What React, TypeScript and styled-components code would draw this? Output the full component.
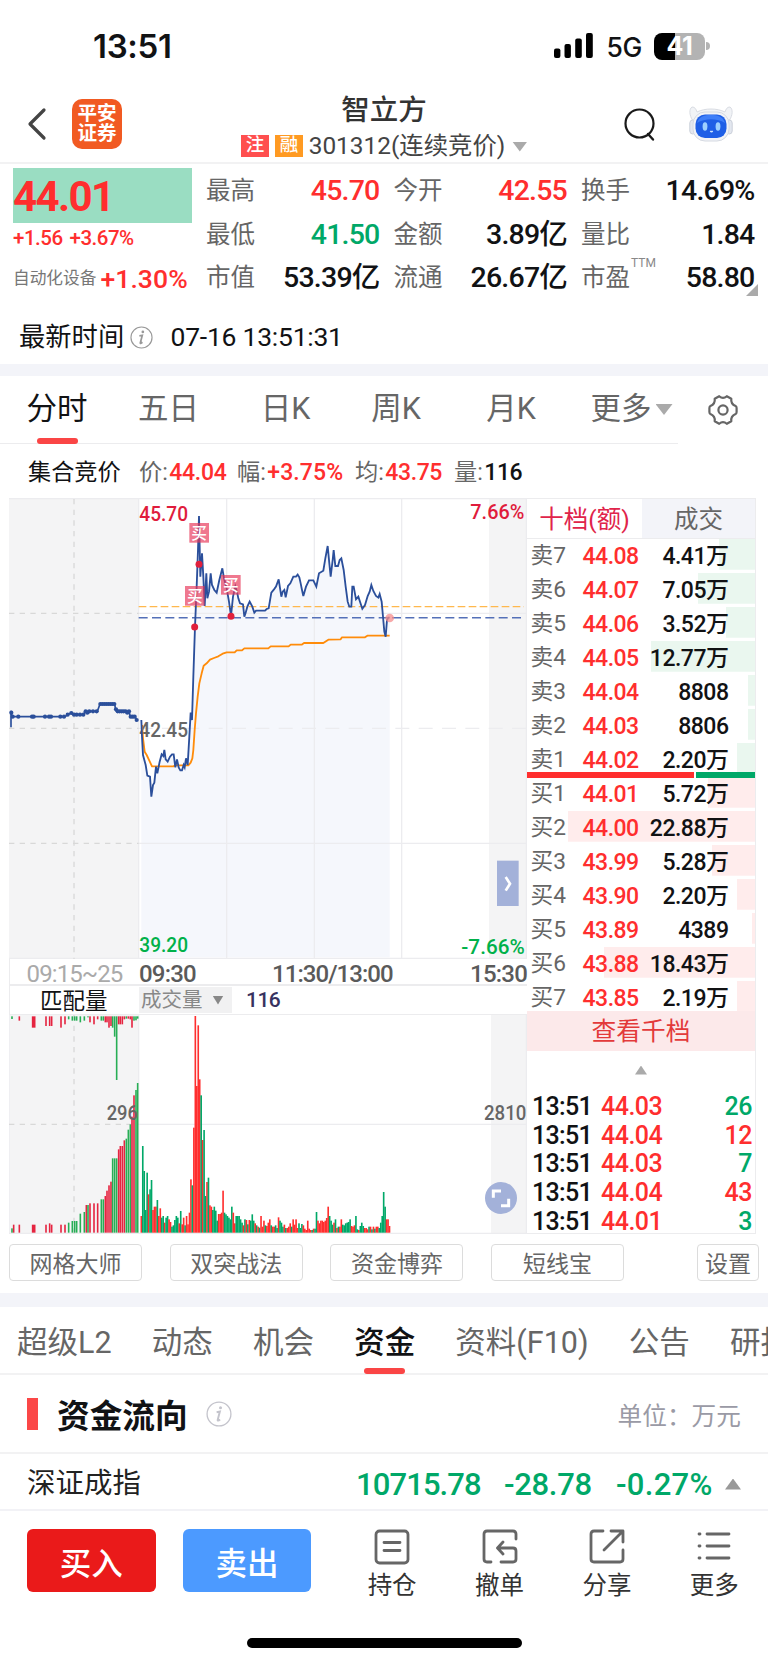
import React from "react";
import styled, { createGlobalStyle } from "styled-components";

const RED = "#ff2e2e";
const GREEN = "#00a868";
const INK = "#111214";
const GREY = "#666";
const RULE = "#ececee";

const Global = createGlobalStyle`
  * { box-sizing: border-box; }
  html, body { margin: 0; background: #fff; }
  body {
    width: 768px;
    overflow-x: hidden;
    font-family: Roboto, "Noto Sans CJK SC", sans-serif;
    color: ${INK};
    line-height: 1;
  }
  svg { display: block; flex: none; }
`;

const Screen = styled.div`
  width: 768px;
  height: 1662px;
  overflow: hidden;
  display: flex;
  flex-direction: column;
  white-space: nowrap;
`;

const Num = styled.span<{ $size: number; $color?: string; $weight?: number; $ls?: number }>`
  font-size: ${(p) => p.$size}px;
  font-weight: ${(p) => p.$weight ?? 500};
  color: ${(p) => p.$color ?? INK};
  letter-spacing: ${(p) => p.$ls ?? -0.5}px;
`;

/* ---------- status bar ---------- */
const StatusBar = styled.div`
  height: 84px;
  padding: 8px 58px 0 93px;
  display: flex;
  align-items: center;
  font-family: Inter, sans-serif;
`;
const Clock = styled.div`
  flex: 1;
  font-size: 33px;
  font-weight: 600;
  letter-spacing: -0.3px;
`;
const Network = styled.div`
  margin: 2px 12px 0 13px;
  font-size: 26.5px;
  font-weight: 500;
  letter-spacing: -0.3px;
`;
const Battery = styled.div`
  width: 51px;
  height: 27px;
  border-radius: 8px;
  background: linear-gradient(90deg, #000 0 21px, #b3b3b3 21px);
  color: #fff;
  font-size: 25px;
  font-weight: 700;
  line-height: 27px;
  text-align: center;
  letter-spacing: -0.3px;
`;
const BatteryCap = styled.div`
  width: 4px;
  height: 8px;
  margin-left: 1px;
  border-radius: 0 4px 4px 0;
  background: #b3b3b3;
`;

/* ---------- header ---------- */
const Header = styled.div`
  height: 80px;
  border-bottom: 2px solid #f2f2f3;
  padding: 0 35px 0 27px;
  display: flex;
  align-items: center;
`;
const HeaderSide = styled.div<{ $width: number; $gap: number; $end?: boolean }>`
  width: ${(p) => p.$width}px;
  padding-top: 1px;
  display: flex;
  align-items: center;
  gap: ${(p) => p.$gap}px;
  justify-content: ${(p) => (p.$end ? "flex-end" : "flex-start")};
`;
const Brand = styled.div`
  width: 50px;
  height: 50px;
  border-radius: 10px;
  background: #f15a22;
  color: #fff;
  font-size: 19.5px;
  line-height: 19.5px;
  font-weight: 700;
  padding-top: 5.5px;
  text-align: center;
`;
const TitleBlock = styled.div`
  flex: 1;
  padding: 9px 0 0 1px;
  display: flex;
  flex-direction: column;
  align-items: center;
`;
const StockName = styled.div`
  font-size: 28.5px;
  font-weight: 500;
  line-height: 38px;
  color: #333;
`;
const StockMeta = styled.div`
  display: flex;
  align-items: center;
  height: 34px;
  font-size: 24.4px;
  color: #444;
`;
const Badge = styled.div<{ $bg: string }>`
  width: 28.5px;
  height: 22px;
  margin: -2px 5.5px 0 0;
  background: ${(p) => p.$bg};
  color: #fff;
  font-size: 18.5px;
  font-weight: 500;
  line-height: 21px;
  text-align: center;
`;
const Down = styled.i<{ $w: number; $h: number; $ml: number; $up?: boolean; $color?: string }>`
  width: ${(p) => p.$w}px;
  height: ${(p) => p.$h}px;
  margin-left: ${(p) => p.$ml}px;
  background: ${(p) => p.$color ?? "#aaa"};
  clip-path: ${(p) => (p.$up ? "polygon(50% 0, 100% 100%, 0 100%)" : "polygon(0 0, 100% 0, 50% 100%)")};
`;

/* ---------- quote ---------- */
const Quote = styled.section`
  height: 200px;
  padding: 4px 13px 0 13px;
`;
const QuoteTop = styled.div`
  display: flex;
  position: relative;
`;
const PriceCol = styled.div`
  width: 179px;
  margin-right: 14px;
`;
const LastPrice = styled.div`
  height: 55px;
  display: flex;
  align-items: center;
  padding-top: 2px;
  background: #9addc2;
`;
const ChangeRow = styled.div`
  height: 30px;
  display: flex;
  align-items: center;
  gap: 7px;
`;
const SectorRow = styled.div`
  height: 53px;
  display: flex;
  align-items: center;
  gap: 4px;
  font-size: 16.7px;
  color: #777;
`;
const StatGrid = styled.div`
  flex: 1;
  padding-top: 1.5px;
  display: grid;
  grid-template-columns: 173.5px 173.5px 173.5px;
  column-gap: 14px;
  grid-auto-rows: 43.6px;
`;
const Stat = styled.div`
  display: flex;
  align-items: center;
  justify-content: space-between;
  font-size: 24.5px;
  color: ${GREY};
`;
const Ttm = styled.sup`
  position: absolute;
  left: 618px;
  top: 89px;
  font-size: 12px;
  line-height: 1;
  color: #888;
`;
const Corner = styled.i`
  position: absolute;
  right: -3px;
  top: 116px;
  width: 12px;
  height: 12px;
  background: #aaa;
  clip-path: polygon(100% 0, 100% 100%, 0 100%);
`;
const TimeRow = styled.div`
  height: 66px;
  padding: 0 0 2px 6px;
  margin-top: -1px;
  display: flex;
  align-items: center;
  font-size: 26.3px;
`;
const TimeValue = styled(Num)`
  margin-left: 18px;
`;
const Band = styled.div<{ $h: number }>`
  height: ${(p) => p.$h}px;
  flex: none;
  background: #f3f4f9;
`;

/* ---------- period tabs ---------- */
const PeriodTabs = styled.nav`
  height: 68px;
  display: grid;
  grid-template-columns: 114px 109px 125px 96px 134px 100px 90px;
`;
const PeriodTab = styled.div<{ $active?: boolean; $shift?: number }>`
  position: relative;
  display: flex;
  align-items: center;
  justify-content: center;
  font-size: 30.5px;
  padding-left: ${(p) => p.$shift ?? 0}px;
  color: ${(p) => (p.$active ? INK : GREY)};
  border-bottom: 1.5px solid ${RULE};
`;
const Underline = styled.i`
  position: absolute;
  bottom: -1px;
  left: 50%;
  width: 41px;
  height: 6.5px;
  margin-left: -20.5px;
  border-radius: 3px;
  background: #fa4545;
`;
const GearCell = styled.div`
  display: flex;
  align-items: center;
  justify-content: center;
  padding-bottom: 1px;
`;
const InfoRow = styled.div`
  height: 54px;
  padding-left: 28px;
  padding-top: 4px;
  display: flex;
  align-items: center;
  font-size: 23.2px;
`;
const InfoItem = styled.span<{ $w: number }>`
  width: ${(p) => p.$w}px;
  color: ${GREY};
  ${Num} { margin-left: 1.5px; }
`;
const Session = styled.span`
  width: 111px;
  color: ${INK};
`;

/* ---------- chart block ---------- */
const Market = styled.section`
  height: 736px;
  padding: 0 12px 0 9px;
  display: flex;
`;
const Charts = styled.div`
  width: 518px;
`;
const AxisRow = styled.div`
  height: 27px;
  padding-top: 3px;
  display: grid;
  grid-template-columns: 129px 133px 121px 1fr;
  align-items: center;
  border-bottom: 2px solid ${RULE};
  border-left: 1px solid ${RULE};
`;
const AxisCell = styled.div<{ $align?: string }>`
  text-align: ${(p) => p.$align ?? "left"};
`;
const VolumeHead = styled.div`
  height: 29px;
  display: flex;
  align-items: center;
  border-left: 1px solid ${RULE};
  border-bottom: 1px solid ${RULE};
`;
const MatchLabel = styled.div`
  width: 129px;
  padding: 2px 0 0 30px;
  font-size: 22.5px;
`;
const Picker = styled.div`
  width: 93px;
  height: 26px;
  padding-left: 2px;
  margin-right: 14px;
  background: #f1f1f2;
  display: flex;
  align-items: center;
  font-size: 20.5px;
  color: #888;
`;

/* ---------- order book ---------- */
const Book = styled.aside`
  width: 229px;
  border: solid ${RULE};
  border-width: 1px 1px 1px 0;
`;
const BookTabs = styled.div`
  height: 40px;
  display: grid;
  grid-template-columns: 115px 1fr;
  border-bottom: 1px solid ${RULE};
`;
const BookTab = styled.div<{ $active?: boolean }>`
  display: flex;
  align-items: center;
  justify-content: center;
  padding-top: 4px;
  font-size: 24.5px;
  color: ${(p) => (p.$active ? "#e0244a" : GREY)};
  background: ${(p) => (p.$active ? "#fff" : "#f3f4f9")};
`;
const Level = styled.div<{ $bar: number; $tint: string }>`
  height: 30.5px;
  margin-bottom: 3.5px;
  padding-top: 4.5px;
  padding-left: 3.5px;
  display: grid;
  grid-template-columns: 52px 58px 88px;
  align-items: center;
  font-size: 22.7px;
  color: ${GREY};
  background: linear-gradient(${(p) => p.$tint}, ${(p) => p.$tint}) right / ${(p) => p.$bar}px 100% no-repeat;
`;
const Right = styled.div`
  text-align: right;
`;
const Ratio = styled.div`
  height: 5.5px;
  margin: -5px 0 -0.5px;
  display: grid;
  grid-template-columns: 167px 1fr;
  column-gap: 1.5px;
  position: relative;
`;
const RatioPart = styled.div<{ $c: string }>`
  background: ${(p) => p.$c};
`;
const MoreLevels = styled.div`
  height: 39.5px;
  margin-top: -4px;
  background: #fce9ea;
  color: #e33a3a;
  font-size: 24.7px;
  display: flex;
  align-items: center;
  justify-content: center;
  padding-top: 4px;
`;
const Fold = styled.div`
  height: 41.5px;
  display: flex;
  justify-content: center;
  padding-top: 15px;
`;
const Trade = styled.div`
  height: 28.6px;
  padding: 1px 3px 0 5px;
  display: grid;
  grid-template-columns: 69px 70px 1fr;
  align-items: center;
`;

/* ---------- shortcuts ---------- */
const Shortcuts = styled.div`
  height: 59px;
  padding: 10px 9px 0;
  display: flex;
  gap: 27.7px;
`;
const Shortcut = styled.button<{ $w: number; $last?: boolean }>`
  width: ${(p) => p.$w}px;
  height: 37px;
  margin-left: ${(p) => (p.$last ? "auto" : "0")};
  padding: 4px 0 0;
  border: 1.5px solid #dcdcdc;
  border-radius: 4px;
  background: #fff;
  font: 23px/1 Roboto, "Noto Sans CJK SC", sans-serif;
  color: ${GREY};
`;

/* ---------- content tabs ---------- */
const ContentTabs = styled.nav`
  height: 68px;
  padding-left: 17px;
  display: flex;
  gap: 40.2px;
  border-bottom: 2px solid #f2f2f3;
`;
const ContentTab = styled.div<{ $active?: boolean }>`
  position: relative;
  flex: none;
  display: flex;
  align-items: center;
  padding-top: 7px;
  font-size: 30.5px;
  font-weight: ${(p) => (p.$active ? 500 : 400)};
  color: ${(p) => (p.$active ? INK : GREY)};
`;
const SectionHead = styled.div`
  height: 79px;
  padding: 0 27px;
  display: flex;
  align-items: center;
  border-bottom: 2px solid #f2f2f3;
`;
const Mark = styled.i`
  width: 11px;
  height: 32px;
  margin-right: 19px;
  background: #fb4747;
`;
const SectionTitle = styled.h2`
  margin: 8px 18px 0 0;
  font-size: 32.7px;
  font-weight: 700;
`;
const Unit = styled.div`
  margin: 7px 0 0 auto;
  font-size: 24.7px;
  color: #9a9aa5;
`;
const IndexRow = styled.div`
  height: 57px;
  padding: 5px 27px 0;
  display: flex;
  align-items: center;
  border-bottom: 2px solid #f2f2f6;
  font-size: 28.5px;
  color: #222;
`;
const IndexValues = styled.div`
  margin-left: auto;
  display: grid;
  grid-template-columns: 148px 112px 97px;
`;

/* ---------- bottom bar ---------- */
const BottomBar = styled.div`
  height: 127px;
  padding: 18px 0 0 27px;
  display: flex;
  align-items: flex-start;
`;
const TradeButton = styled.button<{ $bg: string }>`
  width: 129px;
  height: 63px;
  margin-right: 27px;
  padding: 2px 0 0;
  border: 0;
  border-radius: 6px;
  background: ${(p) => p.$bg};
  color: #fff;
  font: 500 31.5px/1 "Noto Sans CJK SC", sans-serif;
`;
const Actions = styled.div`
  flex: 1;
  display: grid;
  grid-template-columns: repeat(4, 107.4px);
`;
const Action = styled.div`
  display: flex;
  flex-direction: column;
  align-items: center;
  gap: 9px;
  font-size: 24.5px;
  color: #333;
`;
const HomeIndicator = styled.div`
  width: 275px;
  height: 9.5px;
  margin: 0 auto;
  border-radius: 5px;
  background: #000;
`;

const InfoIcon = ({ size, color }: { size: number; color: string }) => (
  <svg width={size} height={size} viewBox="0 0 24 24">
    <circle cx="12" cy="12" r="11" fill="none" stroke={color} strokeWidth="1.2" />
    <circle cx="13.4" cy="6.2" r="1.4" fill={color} />
    <path d="M9.8 10.4l3-.6-2 7.6c-.2 1 .6.9 2.2-.4" fill="none" stroke={color} strokeWidth="1.8" />
  </svg>
);

const Robot = () => (
  <svg width="44" height="36" viewBox="0 0 44 36">
    <path d="M4 15C0 9 0 3 3 1c3 0 4 2 5 5 8-4 20-4 28 0 1-3 2-5 5-5 3 2 3 8-1 14z" fill="#f1f3f6" stroke="#d9dce3" strokeWidth="1" />
    <rect x="0.8" y="14" width="6" height="14" rx="3" fill="#e3e7ef" stroke="#cbd0da" />
    <rect x="37.2" y="14" width="6" height="14" rx="3" fill="#e3e7ef" stroke="#cbd0da" />
    <rect x="4" y="6" width="36" height="29" rx="12" fill="#f1f3f7" stroke="#d6dae2" />
    <rect x="6.5" y="8.5" width="31" height="23.5" rx="9.5" fill="#1f5fe6" />
    <path d="M8 17c2-7 8-8 14-8s12 1 14 8c-8-5-20-5-28 0z" fill="#4b8bff" opacity="0.7" />
    <ellipse cx="16" cy="20.5" rx="2.4" ry="4.2" fill="#9ed0ff" />
    <ellipse cx="29" cy="20.5" rx="2.4" ry="4.2" fill="#9ed0ff" />
    <path d="M21.3 25q1.2 1.5 2.4 0" stroke="#cfe6ff" strokeWidth="1.4" fill="none" />
  </svg>
);

const Gear = () => (
  <svg width="32" height="32" viewBox="0 0 32 32" fill="none" stroke="#666" strokeWidth="2.2" strokeLinejoin="round">
    <path d="M12.2 2.2Q16 5.6 19.8 2.2L24.3 4.8Q23.6 9.8 28.6 12Q29.6 12.5 29.6 14V18Q29.6 19.5 28.6 20Q23.6 22.2 24.3 27.2L19.8 29.8Q16 26.4 12.2 29.8L7.7 27.2Q8.4 22.2 3.4 20Q2.4 19.5 2.4 18V14Q2.4 12.5 3.4 12Q8.4 9.8 7.7 4.8Z" />
    <circle cx="16" cy="16" r="4.6" />
  </svg>
);

/* ---------- price chart; three drawing units per pixel ---------- */
const PRICE =
  "424,690 426,740 429,795 437,825 442,857 450,860 454,920 459,885 463,878 468,830 472,850 479,815 485,793 490,798 493,780 497,808 503,815 510,800 516,793 521,793 526,832 531,808 536,832 541,841 546,841 551,825 554,832 558,805 563,825 568,740 572,668 576,690 580,560 585,410 590,290 594,180 597,78 601,260 606,190 610,260 614,348 619,250 622,325 627,305 632,250 636,285 643,300 650,308 658,270 667,235 672,265 680,295 687,335 693,378 699,320 706,290 712,310 715,325 720,340 729,343 733,380 737,368 742,350 749,335 757,350 763,368 768,362 795,362 800,357 806,355 814,308 822,298 828,290 836,268 844,320 848,305 853,300 857,322 864,288 871,280 880,260 888,260 893,254 898,262 902,280 906,300 910,318 918,290 927,271 940,271 949,290 957,250 970,242 976,205 983,168 988,220 992,260 998,210 1001,180 1006,228 1014,228 1019,210 1024,205 1031,240 1037,290 1043,335 1048,350 1054,350 1057,290 1061,290 1068,328 1075,320 1080,335 1087,356 1095,345 1103,318 1109,305 1114,285 1120,303 1128,318 1135,323 1139,312 1145,335 1149,380 1153,425 1157,440 1161,390 1165,383 1169,383";
const AVERAGE =
  "426,705 429,745 434,785 440,795 448,812 456,829 520,829 526,826 565,826 572,818 577,805 580,780 584,720 588,670 593,620 598,580 605,550 611,527 620,520 630,509 642,504 655,499 668,491 680,487 704,487 710,481 726,481 733,475 805,475 812,469 866,469 872,464 905,464 912,459 970,459 985,449 1022,448 1026,442 1095,442 1102,437 1169,437";
const AUCTION =
  "33,668 37,680 55,680 97,680 195,680 203,674 214,669 222,674 250,674 256,664 292,664 300,642 344,642 347,660 350,664 388,664 390,680 405,680 410,690";
const AUCTION_DOTS: [number, number][] = [
  [34, 668], [38, 680], [55, 680], [96, 680], [101, 680], [135, 680], [147, 680], [153, 680], [181, 680], [192, 680],
  [203, 674], [214, 669], [222, 674], [230, 674], [240, 674], [250, 674], [257, 664], [262, 668], [268, 664], [279, 664],
  [290, 664], [301, 642], [307, 642], [313, 642], [319, 642], [325, 642], [331, 642], [337, 642], [343, 642], [348, 658],
  [353, 664], [359, 664], [365, 664], [371, 664], [377, 664], [382, 668], [387, 664], [392, 680], [398, 680], [404, 680], [410, 690],
];
const BUYS: [number, number, number, number][] = [
  [568, 99, 597, 223],
  [555, 288, 584, 411],
  [663, 255, 693, 379],
];

type LabelProps = { x: number; y: number; len: number; fill: string; children: string };
const ChartLabel = ({ x, y, len, fill, children }: LabelProps) => (
  <text x={x} y={y} textLength={len} lengthAdjust="spacingAndGlyphs" fontSize="62" fontWeight="500" fill={fill}>
    {children}
  </text>
);

const PriceChart = () => (
  <svg width="518" height="461" viewBox="27 24 1554 1383">
    <rect x="27" y="24" width="389" height="1383" fill="#f4f4f5" />
    <rect x="1467" y="24" width="114" height="1383" fill="#f4f4f5" />
    <polygon points={`424,1402 ${PRICE} 1169,1402`} fill="#f5f7fc" />
    <g stroke="#ececef" strokeWidth="4" fill="none">
      <path d="M27 26H1581M416 24V1407M680 24V1407M943 24V1407M1205 24V1407M416 370H1581M416 1060H1581M27 1405H1581M1579 24V1407" />
      <path d="M416 715H1581" strokeDasharray="42 28" />
    </g>
    <g stroke="#d8d8d8" strokeWidth="4">
      <path d="M222 27V1407M27 370H416M27 715H416M27 1060H416" strokeDasharray="16 16" />
    </g>
    <path d="M416 350H1572" stroke="#ffb84d" strokeWidth="4" strokeDasharray="23 10" />
    <path d="M416 383H1566" stroke="#5470b8" strokeWidth="4.5" strokeDasharray="27 13" />
    <polyline points={AUCTION} fill="none" stroke="#2b4f9b" strokeWidth="5" />
    <path d="M33 662V712" stroke="#2b4f9b" strokeWidth="5" />
    {AUCTION_DOTS.map(([x, y]) => (
      <circle key={x} cx={x} cy={y} r="6.3" fill="#2b4f9b" />
    ))}
    <ChartLabel x={418} y={740} len={146} fill="#666">42.45</ChartLabel>
    <polyline points={AVERAGE} fill="none" stroke="#ff8c0a" strokeWidth="5.5" strokeLinejoin="round" />
    <polyline points={PRICE} fill="none" stroke="#2b4f9b" strokeWidth="5.5" />
    {BUYS.map(([x, y, cx, cy]) => (
      <g key={x}>
        <circle cx={cx} cy={cy} r="10.5" fill="#e0203c" />
        <rect x={x} y={y} width="59" height="59" fill="#e8385a" opacity="0.68" />
        <text x={x + 29.5} y={y + 47} textAnchor="middle" fontSize="47" fontWeight="500" fill="#fff">买</text>
      </g>
    ))}
    <circle cx="1169" cy="384" r="13" fill="#f58c8c" opacity="0.75" />
    <ChartLabel x={418} y={94} len={146} fill="#e01c3c">45.70</ChartLabel>
    <ChartLabel x={418} y={1386} len={146} fill="#00b14a">39.20</ChartLabel>
    <ChartLabel x={1411} y={88} len={162} fill="#e01c3c">7.66%</ChartLabel>
    <ChartLabel x={1384} y={1391} len={190} fill="#00b14a">-7.66%</ChartLabel>
    <rect x="1491" y="1112" width="65" height="136" fill="#a3b1d9" />
    <path d="M1517 1161L1530 1181L1517 1202" fill="none" stroke="#fff" strokeWidth="8" />
  </svg>
);

/* ---------- volume chart ---------- */
type Bar = [number, number, string, number?];
const MATCHED: Bar[] = [
  [36, 895, "g"], [41, 884, "r"], [58, 884, "r"], [101, 884, "r", 11], [138, 884, "r"], [149, 880, "r"], [155, 884, "r"],
  [183, 884, "r"], [195, 884, "r"], [206, 878, "g"], [217, 873, "g"], [224, 873, "g"], [230, 873, "g"], [241, 851, "g"],
  [253, 846, "g"], [259, 825, "r"], [264, 825, "g"], [270, 820, "r"], [282, 820, "r"], [293, 820, "r"], [304, 808, "g"],
  [310, 808, "g"], [316, 798, "r"], [321, 782, "r"], [327, 766, "r"], [333, 755, "r"], [338, 685, "g"], [344, 685, "g"],
  [350, 685, "g"], [356, 658, "r"], [361, 648, "r"], [367, 648, "r"], [373, 631, "r"], [379, 626, "g"], [385, 599, "g"],
  [391, 583, "g"], [396, 560, "r"], [402, 496, "r"], [408, 480, "g"], [413, 459, "g"],
];
const UNMATCHED: Bar[] = [
  [36, 267, "g"], [58, 272, "r"], [101, 293, "r", 11], [138, 288, "r"], [149, 288, "r"], [155, 288, "r"], [183, 293, "r"],
  [195, 283, "r"], [206, 268, "g"], [217, 272, "g"], [224, 272, "g"], [230, 272, "g"], [241, 277, "g"], [253, 272, "g"],
  [264, 262, "g"], [270, 277, "r"], [282, 283, "r"], [293, 268, "r"], [304, 272, "g"], [310, 272, "g"], [316, 277, "r"],
  [321, 277, "r"], [327, 293, "r"], [333, 288, "r"], [338, 293, "g"], [344, 320, "g"], [350, 450, "g"], [356, 283, "r"],
  [361, 283, "r"], [367, 283, "r"], [373, 268, "r"], [379, 266, "g"], [385, 266, "r"], [391, 268, "r"], [396, 293, "r"],
  [402, 272, "g"], [408, 271, "g"], [413, 266, "g"],
];
const VOLUME = (
  "50r 260g 185g 68g 180g 115r 130g 158g 68r 78r 78r 98g 50r 73r 45g 50g 30r 45g 50g 40r 32r 18g 22g 38g 50g 45g 28r 65g 25r 45r 22g 50r 25r 60r 160r " +
  "142g 315r 650r 440r 622r 460r 412g 278r 308g 110g 152r 165g 82r 78r 68g 78g 66g 36g 56r 56r 60r 126r 60g 55g 50g 45g 40g 78g 60r 28r 50g 50g 50g 40g 30g 22r " +
  "40g 38r 25g 38r 36g 55g 36g 28r 22g 18r 15g 50r 18r 36r 22g " +
  "20r 30r 40r 22g 18r 18r 22g 14g 46r 36g 30g 18g 24r 14g 14r 18r 28r 18g 40r 24r 40r 14r 28g 14g 26g 22r 12r 8r 36r 12r 8r 8g 12r 12g 62g 36r 28r 36r 36r 32r 36r 44r " +
  "78r 50g 36g 24g 30r 40g 14r 18g 18r 40r 24g 22g 28g 30g 32g 40g 20r 18r 22r 50g 10g 8r 20g 30g 20g 14r 14r 10r 18g 18r 10g 18r 12g 18r 18r 14g 30g 50g 122g 78g 40r 40r 20r"
)
  .split(" ")
  .map((v) => ({ h: parseInt(v, 10), up: v.endsWith("r") }));
const STEP = 4.38;

const VolumeChart = () => (
  <svg width="518" height="219" viewBox="27 255 1554 657">
    <rect x="27" y="255" width="389" height="657" fill="#f4f4f5" />
    <rect x="1473" y="255" width="108" height="657" fill="#f4f4f5" />
    <g stroke="#ececef" strokeWidth="4" fill="none">
      <path d="M416 583H1581M416 255V912M27 910H1581M1579 255V912" />
      <path d="M28 255V912" strokeWidth="2" />
    </g>
    <path d="M222 255V912M27 583H416" stroke="#d8d8d8" strokeWidth="4" strokeDasharray="16 16" />
    {MATCHED.map(([x, y, c, w = 4.8]) => (
      <rect key={`m${x}`} x={x - w / 2} y={y} width={w} height={908 - y} fill={c === "r" ? "#e52440" : "#27ae55"} />
    ))}
    {UNMATCHED.map(([x, y, c, w = 4.8]) => (
      <rect key={`u${x}`} x={x - w / 2} y={259} width={w} height={y - 259} fill={c === "r" ? "#e52440" : "#27ae55"} />
    ))}
    {VOLUME.map(({ h, up }, i) => (
      <rect key={i} x={421.5 + i * STEP} y={908 - h} width={STEP + 0.5} height={h} fill={up ? RED : GREEN} />
    ))}
    <ChartLabel x={320} y={571} len={94} fill="#666">296</ChartLabel>
    <ChartLabel x={1452} y={570} len={127} fill="#666">2810</ChartLabel>
    <circle cx="1503" cy="804" r="48" fill="#a3b1d9" />
    <path d="M1480 803V783H1503M1526 806V827H1503" fill="none" stroke="#fff" strokeWidth="9" />
  </svg>
);

const STATS: [string, string, string][] = [
  ["最高", "45.70", RED], ["今开", "42.55", RED], ["换手", "14.69%", INK],
  ["最低", "41.50", GREEN], ["金额", "3.89亿", INK], ["量比", "1.84", INK],
  ["市值", "53.39亿", INK], ["流通", "26.67亿", INK], ["市盈", "58.80", INK],
];
const SELLS: [string, string, string, number][] = [
  ["卖7", "44.08", "4.41万", 36], ["卖6", "44.07", "7.05万", 57], ["卖5", "44.06", "3.52万", 29], ["卖4", "44.05", "12.77万", 104],
  ["卖3", "44.04", "8808", 7], ["卖2", "44.03", "8806", 7], ["卖1", "44.02", "2.20万", 18],
];
const BIDS: [string, string, string, number][] = [
  ["买1", "44.01", "5.72万", 47], ["买2", "44.00", "22.88万", 187], ["买3", "43.99", "5.28万", 43], ["买4", "43.90", "2.20万", 18],
  ["买5", "43.89", "4389", 3], ["买6", "43.88", "18.43万", 151], ["买7", "43.85", "2.19万", 18],
];
const TRADES: [string, string, string][] = [
  ["44.03", "26", GREEN], ["44.04", "12", RED], ["44.03", "7", GREEN], ["44.04", "43", RED], ["44.01", "3", GREEN],
];

const Levels = ({ rows, tint }: { rows: [string, string, string, number][]; tint: string }) => (
  <>
    {rows.map(([name, price, amount, bar]) => (
      <Level key={name} $bar={bar} $tint={tint}>
        <span>{name}</span>
        <Num $size={23} $color={RED} $ls={-0.5}>{price}</Num>
        <Right><Num $size={23} $ls={-0.5}>{amount}</Num></Right>
      </Level>
    ))}
  </>
);

const stroke = { fill: "none", stroke: "#666", strokeWidth: 2.8, strokeLinecap: "round", strokeLinejoin: "round" } as const;

export default function App() {
  return (
    <Screen>
      <Global />
      <StatusBar>
        <Clock>13:51</Clock>
        <svg width="39" height="26" viewBox="0 0 39 26">
          <rect x="0" y="15.5" width="6.4" height="9.5" rx="2" />
          <rect x="10.5" y="11" width="6.4" height="14" rx="2" />
          <rect x="21.2" y="5.5" width="6.6" height="19.5" rx="2" />
          <rect x="32" y="0" width="6.8" height="25" rx="2" />
        </svg>
        <Network>5G</Network>
        <Battery>41</Battery>
        <BatteryCap />
      </StatusBar>

      <Header>
        <HeaderSide $width={200} $gap={24}>
          <svg width="21" height="34" viewBox="0 0 21 34">
            <path d="M17 3L3 17L17 31" fill="none" stroke="#444" strokeWidth="3.2" strokeLinecap="round" strokeLinejoin="round" />
          </svg>
          <Brand>平安<br />证券</Brand>
        </HeaderSide>
        <TitleBlock>
          <StockName>智立方</StockName>
          <StockMeta>
            <Badge $bg="#ff4f4f">注</Badge>
            <Badge $bg="#ff9a22">融</Badge>
            301312(连续竞价)
            <Down $w={15} $h={10} $ml={7} />
          </StockMeta>
        </TitleBlock>
        <HeaderSide $width={193} $gap={32} $end>
          <svg width="34" height="36" viewBox="0 0 34 36">
            <circle cx="16.5" cy="17.5" r="14" fill="none" stroke="#1a1a1a" strokeWidth="2.2" />
            <path d="M25 28l5 5.5" stroke="#1a1a1a" strokeWidth="2.4" strokeLinecap="round" />
          </svg>
          <Robot />
        </HeaderSide>
      </Header>

      <Quote>
        <QuoteTop>
          <PriceCol>
            <LastPrice><Num $size={42} $weight={700} $color={RED} $ls={-1.6}>44.01</Num></LastPrice>
            <ChangeRow>
              <Num $size={20.5} $color={RED} $ls={-0.5}>+1.56</Num>
              <Num $size={20.5} $color={RED} $ls={-0.5}>+3.67%</Num>
            </ChangeRow>
            <SectorRow>自动化设备<Num $size={26.5} $color={RED} $ls={0.1}>+1.30%</Num></SectorRow>
          </PriceCol>
          <StatGrid>
            {STATS.map(([label, value, color]) => (
              <Stat key={label}>{label}<Num $size={28.5} $color={color} $ls={-0.8}>{value}</Num></Stat>
            ))}
          </StatGrid>
          <Ttm>TTM</Ttm>
          <Corner />
        </QuoteTop>
        <TimeRow>
          最新时间&thinsp;
          <InfoIcon size={23} color="#999" />
          <TimeValue $size={26.5} $weight={400} $ls={-0.25}>07-16 13:51:31</TimeValue>
        </TimeRow>
      </Quote>
      <Band $h={12} />

      <PeriodTabs>
        <PeriodTab $active>分时<Underline /></PeriodTab>
        <PeriodTab>五日</PeriodTab>
        <PeriodTab>日K</PeriodTab>
        <PeriodTab>周K</PeriodTab>
        <PeriodTab>月K</PeriodTab>
        <PeriodTab $shift={7}>更多<Down $w={17} $h={11} $ml={4} /></PeriodTab>
        <GearCell><Gear /></GearCell>
      </PeriodTabs>
      <InfoRow>
        <Session>集合竞价</Session>
        <InfoItem $w={98}>价:<Num $size={23} $color={RED} $ls={-0.3}>44.04</Num></InfoItem>
        <InfoItem $w={118}>幅:<Num $size={23} $color={RED} $ls={0.1}>+3.75%</Num></InfoItem>
        <InfoItem $w={99}>均:<Num $size={23} $color={RED} $ls={-0.4}>43.75</Num></InfoItem>
        <InfoItem $w={80}>量:<Num $size={23} $ls={-0.5}>116</Num></InfoItem>
      </InfoRow>

      <Market>
        <Charts>
          <PriceChart />
          <AxisRow>
            <AxisCell $align="center"><Num $size={24} $weight={400} $color="#aaa" $ls={-0.9}>09:15~25</Num></AxisCell>
            <AxisCell><Num $size={24} $color="#5a5a5a" $ls={-0.8}>09:30</Num></AxisCell>
            <AxisCell><Num $size={24} $color="#5a5a5a" $ls={-0.95}>11:30/13:00</Num></AxisCell>
            <AxisCell $align="right"><Num $size={24} $color="#5a5a5a" $ls={-0.8}>15:30</Num></AxisCell>
          </AxisRow>
          <VolumeHead>
            <MatchLabel>匹配量</MatchLabel>
            <Picker>成交量<Down $w={11} $h={9} $ml={10} $color="#888" /></Picker>
            <Num $size={21} $color="#37325f">116</Num>
          </VolumeHead>
          <VolumeChart />
        </Charts>
        <Book>
          <BookTabs>
            <BookTab $active>十档(额)</BookTab>
            <BookTab>成交</BookTab>
          </BookTabs>
          <Levels rows={SELLS} tint="#eaf7ef" />
          <Ratio><RatioPart $c={RED} /><RatioPart $c={GREEN} /></Ratio>
          <Levels rows={BIDS} tint="#ffecec" />
          <MoreLevels>查看千档</MoreLevels>
          <Fold><Down $up $w={12} $h={9} $ml={0} /></Fold>
          {TRADES.map(([price, lots, color], i) => (
            <Trade key={i}>
              <Num $size={25} $ls={-0.7}>13:51</Num>
              <Num $size={25} $color={RED}>{price}</Num>
              <Right><Num $size={25} $color={color}>{lots}</Num></Right>
            </Trade>
          ))}
        </Book>
      </Market>

      <Shortcuts>
        <Shortcut $w={133}>网格大师</Shortcut>
        <Shortcut $w={133}>双突战法</Shortcut>
        <Shortcut $w={133}>资金博弈</Shortcut>
        <Shortcut $w={133}>短线宝</Shortcut>
        <Shortcut $w={62} $last>设置</Shortcut>
      </Shortcuts>
      <Band $h={14} />

      <ContentTabs>
        <ContentTab>超级L2</ContentTab>
        <ContentTab>动态</ContentTab>
        <ContentTab>机会</ContentTab>
        <ContentTab $active>资金<Underline /></ContentTab>
        <ContentTab>资料(F10)</ContentTab>
        <ContentTab>公告</ContentTab>
        <ContentTab>研报</ContentTab>
      </ContentTabs>
      <SectionHead>
        <Mark />
        <SectionTitle>资金流向</SectionTitle>
        <InfoIcon size={26} color="#c4c4cc" />
        <Unit>单位：万元</Unit>
      </SectionHead>
      <IndexRow>
        深证成指
        <IndexValues>
          <Num $size={31} $color={GREEN} $ls={-0.9}>10715.78</Num>
          <Num $size={31} $color={GREEN} $ls={-0.3}>-28.78</Num>
          <Num $size={31} $color={GREEN} $ls={0.3}>-0.27%</Num>
        </IndexValues>
        <Down $up $w={16} $h={11} $ml={12} $color="#999" />
      </IndexRow>

      <BottomBar>
        <TradeButton $bg="#ea1a1a">买入</TradeButton>
        <TradeButton $bg="#4c9aff">卖出</TradeButton>
        <Actions>
          <Action>
            <svg width="36" height="36" viewBox="0 0 36 36" {...stroke}>
              <rect x="2" y="2" width="32" height="32" rx="3.5" />
              <path d="M10 13.5H26M10 21.5H26" />
            </svg>
            持仓
          </Action>
          <Action>
            <svg width="36" height="36" viewBox="0 0 36 36" {...stroke}>
              <path d="M34 10V5Q34 2 31 2H5Q2 2 2 5V30Q2 33 5 33H9M19 33H31Q34 33 34 30V22Q34 19 31 19H16M21 13L15.5 19L21 25" />
            </svg>
            撤单
          </Action>
          <Action>
            <svg width="36" height="36" viewBox="0 0 36 36" {...stroke}>
              <path d="M14 2H5Q2 2 2 5V30Q2 33 5 33H31Q34 33 34 30V21M22 2H34V13M33 3L15 21" />
            </svg>
            分享
          </Action>
          <Action>
            <svg width="36" height="36" viewBox="0 0 36 36" {...stroke}>
              <path d="M11 5H33M11 17H33M11 29H33M3 5H4M3 17H4M3 29H4" />
            </svg>
            更多
          </Action>
        </Actions>
      </BottomBar>
      <HomeIndicator />
    </Screen>
  );
}
